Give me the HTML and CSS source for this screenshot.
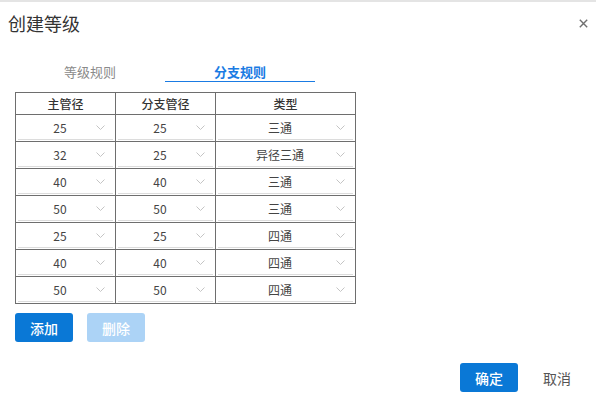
FILE: index.html
```html
<!DOCTYPE html>
<html>
<head>
  <title>创建等级</title>
  <meta charset="UTF-8">
  <meta name="viewport" content="width=device-width, initial-scale=1.0">
  <link rel="stylesheet" href="styles.css">
</head>
<body>
  <div class="dialog">
    <div class="dialog-header">
      <span class="dialog-title">创建等级</span>
      <span class="dialog-close">
        <svg width="9" height="9" viewBox="0 0 9 9"><path d="M0.8 0.8 L8.2 8.2 M8.2 0.8 L0.8 8.2" stroke="#707070" stroke-width="1.4" fill="none"/></svg>
      </span>
    </div>
    <div class="dialog-body">
      <div class="tabs">
        <div class="tab">等级规则</div>
        <div class="tab active">分支规则</div>
      </div>
      <div class="rule-grid" id="grid">
        <div class="head-cell">主管径</div>
        <div class="head-cell">分支管径</div>
        <div class="head-cell">类型</div>
      </div>
      <div class="actions">
        <button class="btn btn-primary">添加</button>
        <button class="btn btn-disabled">删除</button>
      </div>
    </div>
    <div class="dialog-footer">
      <button class="btn btn-primary">确定</button>
      <button class="btn btn-text">取消</button>
    </div>
  </div>

  <script>
    const rows = [
      ["25", "25", "三通"],
      ["32", "25", "异径三通"],
      ["40", "40", "三通"],
      ["50", "50", "三通"],
      ["25", "25", "四通"],
      ["40", "40", "四通"],
      ["50", "50", "四通"]
    ];
    const grid = document.getElementById("grid");
    const arrow = '<svg width="9" height="5" viewBox="0 0 9 5"><polyline points="0.5,0.5 4.5,4.5 8.5,0.5" stroke="#c4c4c4" stroke-width="1" fill="none"/></svg>';

    rows.forEach(row => {
      row.forEach(value => {
        const cell = document.createElement("div");
        cell.classList.add("cell");
        cell.innerHTML = `<div class="select"><span class="select-value">${value}</span>${arrow}</div>`;
        grid.appendChild(cell);
      });
    });
  </script>
</body>
</html>
```

FILE: styles.css
```css
body {
  font-family: "Noto Sans CJK SC", "Microsoft YaHei", sans-serif;
  margin: 0;
  padding: 0;
  background-color: #fff;
  color: #333;
}

.dialog {
  height: 397px;
  box-sizing: border-box;
  border-top: 2px solid #e4e4e4;
  display: flex;
  flex-direction: column;
}

.dialog-header {
  height: 42px;
  display: flex;
  justify-content: space-between;
  align-items: center;
  padding: 0 8px;
}

.dialog-title {
  font-size: 18px;
  line-height: 24px;
  color: #333;
}

.dialog-close {
  display: flex;
  margin-top: 1px;
  cursor: pointer;
}

.dialog-body {
  padding: 0 15px;
  flex: 1;
}

.tabs {
  display: flex;
  margin-top: 18px;
}

.tab {
  width: 150px;
  height: 19px;
  line-height: 19px;
  text-align: center;
  font-size: 13px;
  color: #8a8a8a;
  border-bottom: 1px solid transparent;
}

.tab.active {
  color: #1a7be3;
  font-weight: bold;
  border-bottom-color: #1a7be3;
}

.rule-grid {
  margin-top: 10px;
  display: grid;
  grid-template-columns: 100px 100px 140px;
  width: 340px;
  border-top: 1px solid #6e6e6e;
  border-left: 1px solid #6e6e6e;
}

.head-cell {
  height: 21px;
  line-height: 21px;
  text-align: center;
  font-size: 12px;
  font-weight: 500;
  color: #333;
  border-right: 1px solid #6e6e6e;
  border-bottom: 1px solid #6e6e6e;
}

.cell {
  height: 24px;
  padding: 1px 2px;
  border-right: 1px solid #6e6e6e;
  border-bottom: 1px solid #6e6e6e;
}

.select {
  height: 23px;
  display: flex;
  align-items: center;
  border-bottom: 1px solid #dcdcdc;
}

.select-value {
  flex: 1;
  padding-left: 6px;
  text-align: center;
  font-size: 12px;
  color: #444;
}

.select svg {
  margin-right: 8px;
}

.actions {
  display: flex;
  gap: 14px;
  margin-top: 9px;
}

.btn {
  width: 58px;
  height: 29px;
  border: none;
  border-radius: 3px;
  font-family: inherit;
  font-size: 14px;
  padding: 0;
  cursor: pointer;
}

.btn-primary {
  background-color: #0a78d6;
  color: #fff;
  font-weight: 500;
}

.btn-disabled {
  background-color: #acd3f6;
  color: #fff;
  font-weight: 500;
  cursor: default;
}

.btn-text {
  background: none;
  color: #555;
}

.dialog-footer {
  display: flex;
  justify-content: flex-end;
  gap: 10px;
  padding: 0 10px 5px;
}
```
